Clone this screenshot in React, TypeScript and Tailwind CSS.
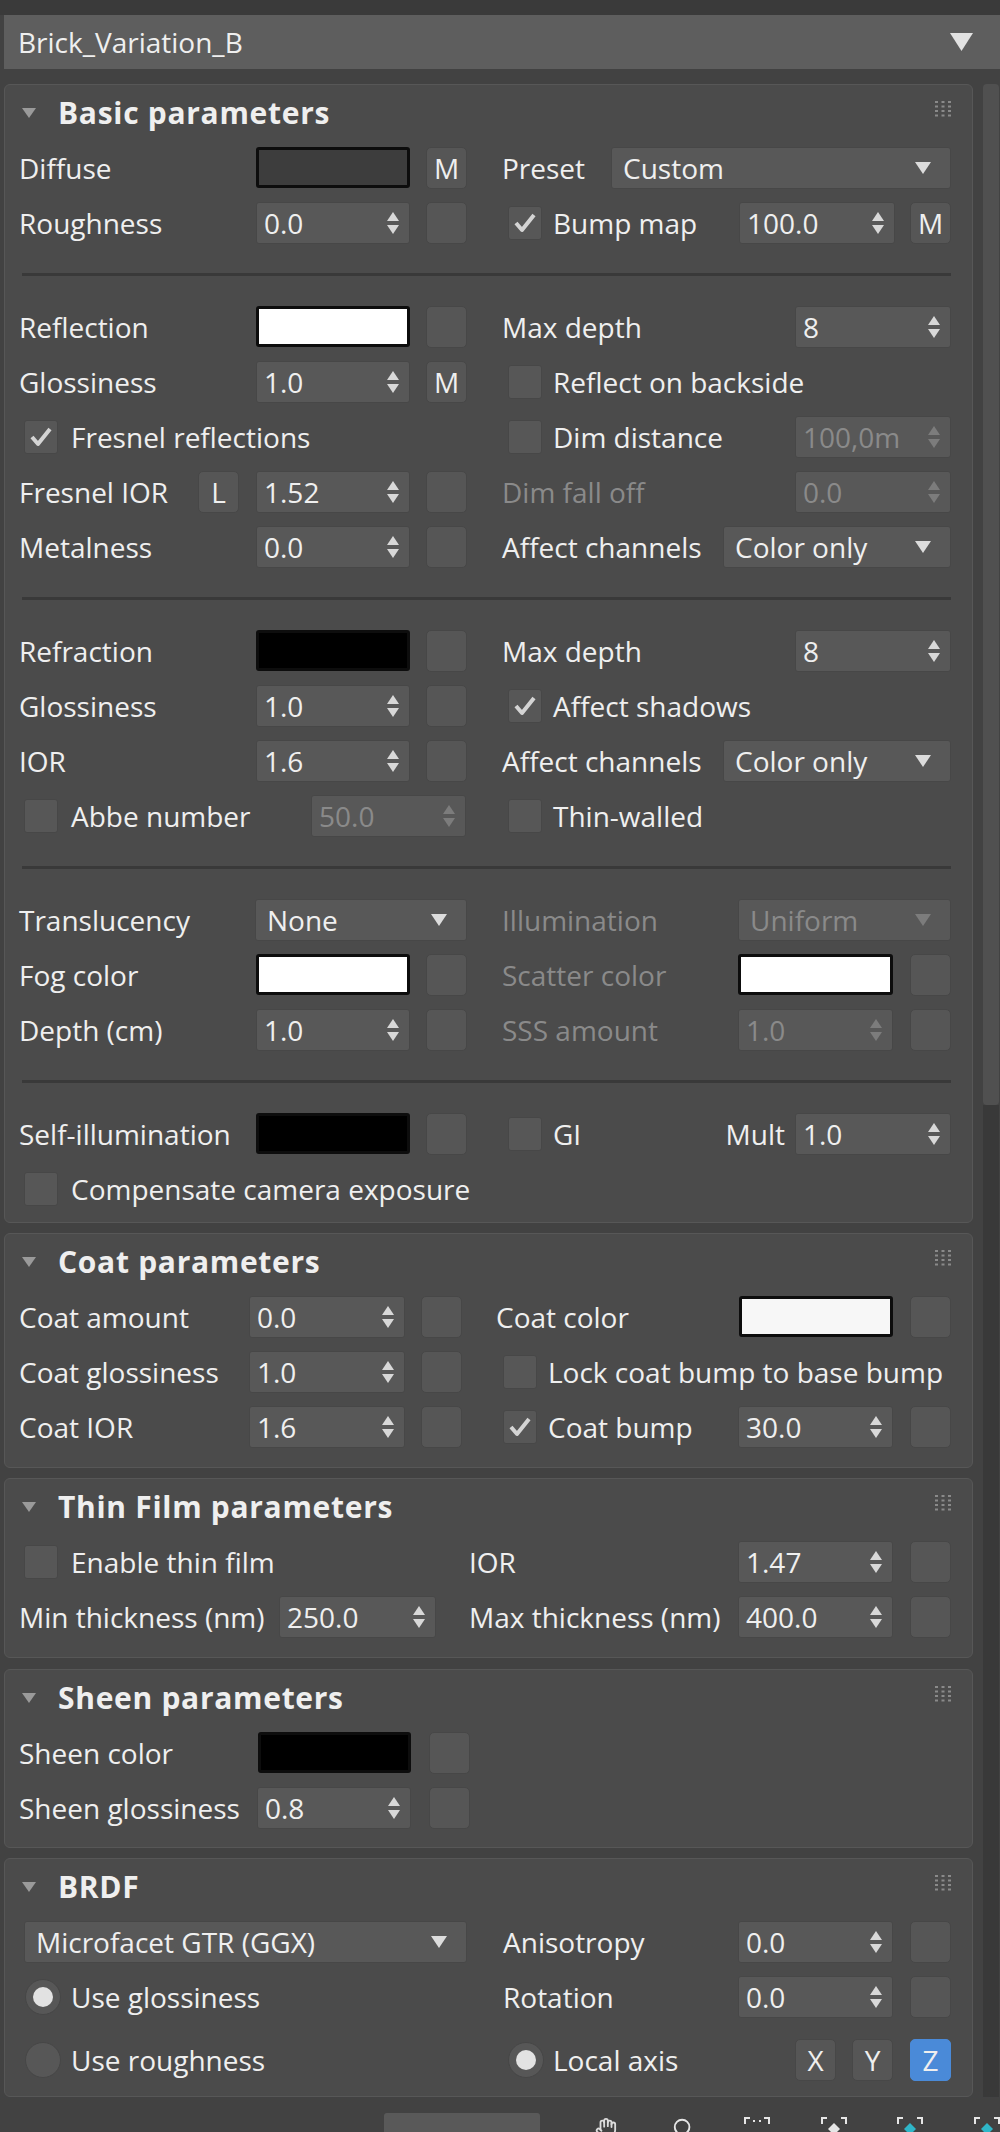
import { ReactNode } from "react";
import { Hand, Search } from "lucide-react";

const Arrows = ({ dim }: { dim?: boolean }) => (
  <svg width="12" height="22" viewBox="0 0 12 22" className="shrink-0">
    <polygon points="6,0 12,9 0,9" fill={dim ? "#7c7c7c" : "#d8d8d8"} />
    <polygon points="0,13 12,13 6,22" fill={dim ? "#7c7c7c" : "#d8d8d8"} />
  </svg>
);

const Spinner = ({
  value,
  w,
  dim,
  className = "",
}: {
  value: string;
  w: string;
  dim?: boolean;
  className?: string;
}) => (
  <div
    className={`${w} ${className} flex h-[42px] shrink-0 items-center rounded-[3px] border border-[#474747] bg-[#585858] pl-[7px] pr-[10px] ${
      dim ? "text-[#8a8a8a]" : ""
    }`}
  >
    <span className="flex-1">{value}</span>
    <Arrows dim={dim} />
  </div>
);

const Drop = ({
  value,
  w,
  dim,
  className = "",
}: {
  value: string;
  w: string;
  dim?: boolean;
  className?: string;
}) => (
  <div
    className={`${w} ${className} flex h-[42px] shrink-0 items-center rounded-[3px] border border-[#474747] bg-[#585858] pl-[11px] pr-[19px] ${
      dim ? "text-[#8a8a8a]" : ""
    }`}
  >
    <span className="flex-1">{value}</span>
    <svg width="16" height="12" viewBox="0 0 16 12" className="shrink-0">
      <polygon points="0,0 16,0 8,12" fill={dim ? "#7c7c7c" : "#dcdcdc"} />
    </svg>
  </div>
);

const Btn = ({
  label = "",
  active,
  className = "",
}: {
  label?: string;
  active?: boolean;
  className?: string;
}) => (
  <div
    className={`flex h-[42px] w-[41px] shrink-0 items-center justify-center rounded-[5px] border ${
      active ? "border-[#4a8ad8] bg-[#4a8ad8]" : "border-[#474747] bg-[#565656]"
    } ${className}`}
  >
    {label}
  </div>
);

const Swatch = ({ color, w, className = "" }: { color: string; w: string; className?: string }) => (
  <div className={`${w} ${color} ${className} h-[41px] shrink-0 rounded-[3px] border-[3px] border-[#0d0d0d]`} />
);

const Check = ({ on, className = "" }: { on?: boolean; className?: string }) => (
  <div
    className={`flex h-[34px] w-[34px] shrink-0 items-center justify-center rounded-[3px] border border-[#474747] bg-[#575757] ${className}`}
  >
    {on && (
      <svg width="24" height="22" viewBox="0 0 24 22">
        <path d="M3 11 L9 18 L21 3" fill="none" stroke="#d4d4d4" strokeWidth="4" strokeLinejoin="round" />
      </svg>
    )}
  </div>
);

const Radio = ({ on, className = "" }: { on?: boolean; className?: string }) => (
  <div
    className={`flex h-[36px] w-[36px] shrink-0 items-center justify-center rounded-full border border-[#464646] bg-[#575757] ${className}`}
  >
    {on && <div className="h-[20px] w-[20px] rounded-full bg-[#e2e2e2]" />}
  </div>
);

const Grip = () => (
  <svg width="16" height="16" viewBox="0 0 16 16" className="mb-[8px] ml-auto shrink-0">
    {[0, 6.5, 13].map((x) =>
      [0, 4.5, 9, 13.5].map((y) => <rect key={`${x}-${y}`} x={x} y={y} width="3" height="2" fill="#8a8a8a" />)
    )}
  </svg>
);

const Panel = ({ title, pb, children }: { title: string; pb: string; children: ReactNode }) => (
  <div className={`rounded-[6px] border border-[#575757] bg-[#4b4b4b] pl-[14px] pr-[21px] ${pb}`}>
    <div className="flex h-[55px] items-center">
      <svg width="14" height="10" viewBox="0 0 14 10" className="ml-[3px] shrink-0">
        <polygon points="0,0 14,0 7,10" fill="#9a9a9a" />
      </svg>
      <span className="ml-[22px] text-[30px] font-bold tracking-[0.7px]">{title}</span>
      <Grip />
    </div>
    {children}
  </div>
);

const Sep = () => (
  <div className="flex h-[49px] items-center pl-[3px]">
    <div className="h-[3px] w-full bg-[#393939]" />
  </div>
);

const Row = ({
  left,
  right,
  lw = "w-[483px]",
  className = "",
}: {
  left: ReactNode;
  right?: ReactNode;
  lw?: string;
  className?: string;
}) => (
  <div className={`flex h-[55px] items-center ${className}`}>
    <div className={`${lw} flex shrink-0 items-center whitespace-nowrap`}>{left}</div>
    <div className="flex flex-1 items-center whitespace-nowrap">{right}</div>
  </div>
);

const Dim = ({ children }: { children: ReactNode }) => <span className="text-[#8a8a8a]">{children}</span>;

const Brackets = ({ fill }: { fill?: string }) => (
  <svg width="26" height="20" viewBox="0 0 26 20" className="shrink-0">
    <path d="M1 7 V1 H6 M20 1 H25 V7" fill="none" stroke="#e6e6e6" strokeWidth="2" />
    {fill ? (
      <polygon points="13,6 19,12 13,18 7,12" fill={fill} />
    ) : (
      <g fill="#e6e6e6">
        <rect x="9" y="3" width="2" height="2" />
        <rect x="15" y="3" width="2" height="2" />
      </g>
    )}
  </svg>
);

export default function App() {
  return (
    <div className="h-[2132px] w-[1000px] overflow-hidden bg-[#424242] font-['Open_Sans',sans-serif] text-[28px] leading-none text-[#efefef]">
      <div className="h-[15px] bg-[#3a3a3a]" />
      <div className="ml-[4px] flex h-[54px] items-center bg-[#5e5e5e] pl-[14px] pr-[27px]">
        <span className="flex-1">Brick_Variation_B</span>
        <svg width="23" height="18" viewBox="0 0 23 18">
          <polygon points="0,0 23,0 11.5,18" fill="#e2e2e2" />
        </svg>
      </div>

      <div className="mt-[15px] flex">
        <div className="ml-[4px] flex w-[969px] flex-col">
          <Panel title="Basic parameters" pb="pb-[6px]">
            <Row
              left={
                <>
                  <span className="w-[237px]">Diffuse</span>
                  <Swatch color="bg-[#3d3d3d]" w="w-[154px]" />
                  <Btn label="M" className="ml-[16px]" />
                </>
              }
              right={
                <>
                  <span>Preset</span>
                  <Drop value="Custom" w="w-[340px]" className="ml-auto" />
                </>
              }
            />
            <Row
              left={
                <>
                  <span className="w-[237px]">Roughness</span>
                  <Spinner value="0.0" w="w-[154px]" />
                  <Btn className="ml-[16px]" />
                </>
              }
              right={
                <>
                  <Check on className="ml-[6px]" />
                  <span className="ml-[11px]">Bump map</span>
                  <Spinner value="100.0" w="w-[156px]" className="ml-auto" />
                  <Btn label="M" className="ml-[15px]" />
                </>
              }
            />
            <Sep />
            <Row
              left={
                <>
                  <span className="w-[237px]">Reflection</span>
                  <Swatch color="bg-white" w="w-[154px]" />
                  <Btn className="ml-[16px]" />
                </>
              }
              right={
                <>
                  <span>Max depth</span>
                  <Spinner value="8" w="w-[156px]" className="ml-auto" />
                </>
              }
            />
            <Row
              left={
                <>
                  <span className="w-[237px]">Glossiness</span>
                  <Spinner value="1.0" w="w-[154px]" />
                  <Btn label="M" className="ml-[16px]" />
                </>
              }
              right={
                <>
                  <Check className="ml-[6px]" />
                  <span className="ml-[11px]">Reflect on backside</span>
                </>
              }
            />
            <Row
              left={
                <>
                  <Check on className="ml-[5px]" />
                  <span className="ml-[13px]">Fresnel reflections</span>
                </>
              }
              right={
                <>
                  <Check className="ml-[6px]" />
                  <span className="ml-[11px]">Dim distance</span>
                  <Spinner value="100,0m" w="w-[156px]" dim className="ml-auto" />
                </>
              }
            />
            <Row
              left={
                <>
                  <span className="w-[179px]">Fresnel IOR</span>
                  <Btn label="L" />
                  <Spinner value="1.52" w="w-[154px]" className="ml-[17px]" />
                  <Btn className="ml-[16px]" />
                </>
              }
              right={
                <>
                  <Dim>Dim fall off</Dim>
                  <Spinner value="0.0" w="w-[156px]" dim className="ml-auto" />
                </>
              }
            />
            <Row
              left={
                <>
                  <span className="w-[237px]">Metalness</span>
                  <Spinner value="0.0" w="w-[154px]" />
                  <Btn className="ml-[16px]" />
                </>
              }
              right={
                <>
                  <span>Affect channels</span>
                  <Drop value="Color only" w="w-[228px]" className="ml-auto" />
                </>
              }
            />
            <Sep />
            <Row
              left={
                <>
                  <span className="w-[237px]">Refraction</span>
                  <Swatch color="bg-black" w="w-[154px]" />
                  <Btn className="ml-[16px]" />
                </>
              }
              right={
                <>
                  <span>Max depth</span>
                  <Spinner value="8" w="w-[156px]" className="ml-auto" />
                </>
              }
            />
            <Row
              left={
                <>
                  <span className="w-[237px]">Glossiness</span>
                  <Spinner value="1.0" w="w-[154px]" />
                  <Btn className="ml-[16px]" />
                </>
              }
              right={
                <>
                  <Check on className="ml-[6px]" />
                  <span className="ml-[11px]">Affect shadows</span>
                </>
              }
            />
            <Row
              left={
                <>
                  <span className="w-[237px]">IOR</span>
                  <Spinner value="1.6" w="w-[154px]" />
                  <Btn className="ml-[16px]" />
                </>
              }
              right={
                <>
                  <span>Affect channels</span>
                  <Drop value="Color only" w="w-[228px]" className="ml-auto" />
                </>
              }
            />
            <Row
              left={
                <>
                  <Check className="ml-[5px]" />
                  <span className="ml-[13px] w-[240px]">Abbe number</span>
                  <Spinner value="50.0" w="w-[155px]" dim />
                </>
              }
              right={
                <>
                  <Check className="ml-[6px]" />
                  <span className="ml-[11px]">Thin-walled</span>
                </>
              }
            />
            <Sep />
            <Row
              left={
                <>
                  <span className="w-[236px]">Translucency</span>
                  <Drop value="None" w="w-[212px]" />
                </>
              }
              right={
                <>
                  <Dim>Illumination</Dim>
                  <Drop value="Uniform" w="w-[213px]" dim className="ml-auto" />
                </>
              }
            />
            <Row
              left={
                <>
                  <span className="w-[237px]">Fog color</span>
                  <Swatch color="bg-white" w="w-[154px]" />
                  <Btn className="ml-[16px]" />
                </>
              }
              right={
                <>
                  <Dim>Scatter color</Dim>
                  <Swatch color="bg-white" w="w-[155px]" className="ml-auto" />
                  <Btn className="ml-[17px]" />
                </>
              }
            />
            <Row
              left={
                <>
                  <span className="w-[237px]">Depth (cm)</span>
                  <Spinner value="1.0" w="w-[154px]" />
                  <Btn className="ml-[16px]" />
                </>
              }
              right={
                <>
                  <Dim>SSS amount</Dim>
                  <Spinner value="1.0" w="w-[155px]" dim className="ml-auto" />
                  <Btn className="ml-[17px]" />
                </>
              }
            />
            <Sep />
            <Row
              left={
                <>
                  <span className="w-[237px]">Self-illumination</span>
                  <Swatch color="bg-black" w="w-[154px]" />
                  <Btn className="ml-[16px]" />
                </>
              }
              right={
                <>
                  <Check className="ml-[6px]" />
                  <span className="ml-[11px]">GI</span>
                  <span className="ml-auto">Mult</span>
                  <Spinner value="1.0" w="w-[156px]" className="ml-[10px]" />
                </>
              }
            />
            <Row
              left={
                <>
                  <Check className="ml-[5px]" />
                  <span className="ml-[13px]">Compensate camera exposure</span>
                </>
              }
            />
          </Panel>

          <div className="h-[10px]" />
          <Panel title="Coat parameters" pb="pb-[13px]">
            <Row
              lw="w-[477px]"
              left={
                <>
                  <span className="w-[230px]">Coat amount</span>
                  <Spinner value="0.0" w="w-[156px]" />
                  <Btn className="ml-[16px]" />
                </>
              }
              right={
                <>
                  <span>Coat color</span>
                  <Swatch color="bg-[#f7f7f7]" w="w-[154px]" className="ml-auto" />
                  <Btn className="ml-[17px]" />
                </>
              }
            />
            <Row
              lw="w-[477px]"
              left={
                <>
                  <span className="w-[230px]">Coat glossiness</span>
                  <Spinner value="1.0" w="w-[156px]" />
                  <Btn className="ml-[16px]" />
                </>
              }
              right={
                <>
                  <Check className="ml-[7px]" />
                  <span className="ml-[11px]">Lock coat bump to base bump</span>
                </>
              }
            />
            <Row
              lw="w-[477px]"
              left={
                <>
                  <span className="w-[230px]">Coat IOR</span>
                  <Spinner value="1.6" w="w-[156px]" />
                  <Btn className="ml-[16px]" />
                </>
              }
              right={
                <>
                  <Check on className="ml-[7px]" />
                  <span className="ml-[11px]">Coat bump</span>
                  <Spinner value="30.0" w="w-[155px]" className="ml-auto" />
                  <Btn className="ml-[17px]" />
                </>
              }
            />
          </Panel>

          <div className="h-[10px]" />
          <Panel title="Thin Film parameters" pb="pb-[13px]">
            <Row
              lw="w-[450px]"
              left={
                <>
                  <Check className="ml-[5px]" />
                  <span className="ml-[13px]">Enable thin film</span>
                </>
              }
              right={
                <>
                  <span>IOR</span>
                  <Spinner value="1.47" w="w-[155px]" className="ml-auto" />
                  <Btn className="ml-[17px]" />
                </>
              }
            />
            <Row
              lw="w-[450px]"
              left={
                <>
                  <span className="w-[260px]">Min thickness (nm)</span>
                  <Spinner value="250.0" w="w-[157px]" />
                </>
              }
              right={
                <>
                  <span>Max thickness (nm)</span>
                  <Spinner value="400.0" w="w-[155px]" className="ml-auto" />
                  <Btn className="ml-[17px]" />
                </>
              }
            />
          </Panel>

          <div className="h-[11px]" />
          <Panel title="Sheen parameters" pb="pb-[12px]">
            <Row
              left={
                <>
                  <span className="w-[239px]">Sheen color</span>
                  <Swatch color="bg-black" w="w-[153px]" />
                  <Btn className="ml-[18px]" />
                </>
              }
            />
            <Row
              left={
                <>
                  <span className="w-[238px]">Sheen glossiness</span>
                  <Spinner value="0.8" w="w-[154px]" />
                  <Btn className="ml-[18px]" />
                </>
              }
            />
          </Panel>

          <div className="h-[10px]" />
          <Panel title="BRDF" pb="pb-[9px]">
            <Row
              lw="w-[484px]"
              left={<Drop value="Microfacet GTR (GGX)" w="w-[443px]" className="ml-[5px]" />}
              right={
                <>
                  <span>Anisotropy</span>
                  <Spinner value="0.0" w="w-[155px]" className="ml-auto" />
                  <Btn className="ml-[17px]" />
                </>
              }
            />
            <Row
              lw="w-[484px]"
              left={
                <>
                  <Radio on className="ml-[6px]" />
                  <span className="ml-[10px]">Use glossiness</span>
                </>
              }
              right={
                <>
                  <span>Rotation</span>
                  <Spinner value="0.0" w="w-[155px]" className="ml-auto" />
                  <Btn className="ml-[17px]" />
                </>
              }
            />
            <Row
              lw="w-[484px]"
              className="mt-[8px]"
              left={
                <>
                  <Radio className="ml-[6px]" />
                  <span className="ml-[10px]">Use roughness</span>
                </>
              }
              right={
                <>
                  <Radio on className="ml-[5px]" />
                  <span className="ml-[9px]">Local axis</span>
                  <Btn label="X" className="ml-auto" />
                  <Btn label="Y" className="ml-[16px]" />
                  <Btn label="Z" active className="ml-[17px]" />
                </>
              }
            />
          </Panel>
        </div>

        <div className="ml-[10px] flex w-[16px] flex-col">
          <div className="h-[1021px] rounded-[4px] bg-[#505050]" />
          <div className="h-[992px] bg-[#393939]" />
        </div>
      </div>

      <div className="flex h-[35px] items-start">
        <div className="ml-[384px] mt-[16px] h-[30px] w-[158px] rounded-t-[3px] bg-[#595959]" />
        <Hand size={22} color="#dcdcdc" className="ml-[55px] mt-[20px] shrink-0" />
        <Search size={22} color="#e6e6e6" className="ml-[55px] mt-[20px] shrink-0" />
        <div className="ml-[50px] mt-[20px]">
          <Brackets />
        </div>
        <div className="ml-[51px] mt-[20px]">
          <Brackets fill="#e6e6e6" />
        </div>
        <div className="ml-[50px] mt-[20px]">
          <Brackets fill="#2fb6c8" />
        </div>
        <div className="ml-[51px] mt-[20px]">
          <Brackets fill="#2fb6c8" />
        </div>
      </div>
    </div>
  );
}
